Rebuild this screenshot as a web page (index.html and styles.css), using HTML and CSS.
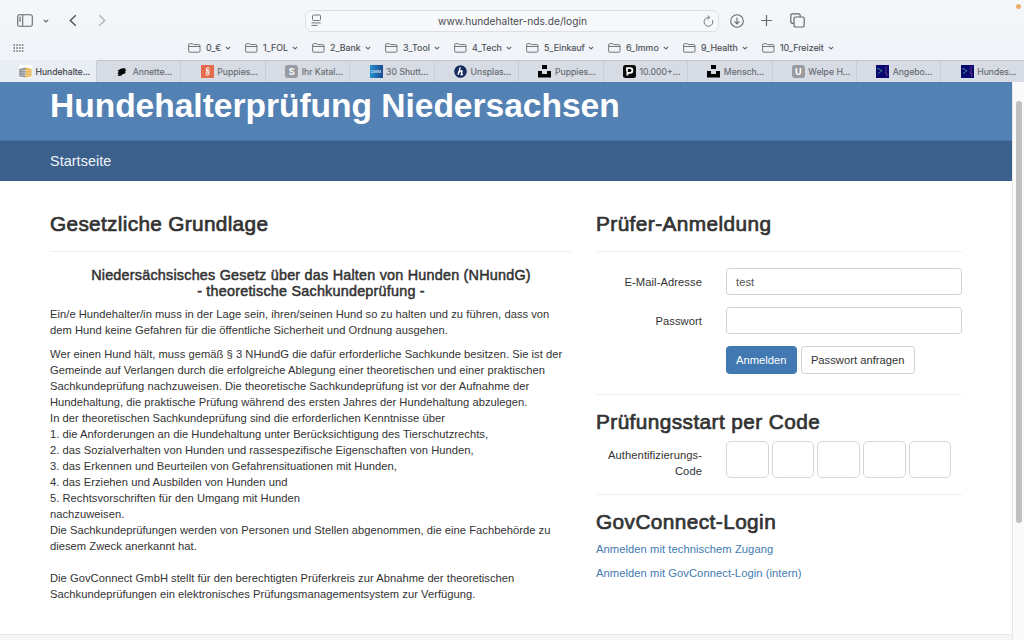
FILE: index.html
```html
<!DOCTYPE html>
<html lang="de">
<head>
<meta charset="utf-8">
<title>Hundehalterprüfung Niedersachsen</title>
<link rel="stylesheet" href="styles.css">
</head>
<body>
<svg class="defs" width="0" height="0" aria-hidden="true">
  <symbol id="folder" viewBox="0 0 13 10"><path d="M.6 8V1.9Q.6.7 1.8.7h2.4q.5 0 .9.4l.6.5h5.1q1.2 0 1.2 1.2V8q0 1.2-1.2 1.2h-9Q.6 9.200.6 8zM.6 3.500h11.400" /></symbol>
  <symbol id="chev" viewBox="0 0 6 4"><path d="M.8.800 3 3 5.200.800"/></symbol>
  <symbol id="unsplash" viewBox="0 0 13 13"><path fill="#000" d="M4 0h5v4H4zM0 6h4v3h5V6h4v6.500H0z"/></symbol>
  <symbol id="dark" viewBox="0 0 13 13"><path fill="#080870" d="M0 0h13v13H0z"/><path d="M1 4l2-.5 1 1.500 2 .5-1.500 1.500L2 8.500" fill="none" stroke="#3f8190" stroke-width="1"/><path d="M11 1.500L9.500 3.500l1 2-1.500 2 2 1-.5 3" fill="none" stroke="#7a3880" stroke-width="1"/></symbol>
</svg>
<header class="chrome">
  <div class="toolbar">
    <svg class="i-side" width="16" height="13" viewBox="0 0 16 13"><rect x=".7" y=".7" width="14.600" height="11.600" rx="1.800"/><path d="M5.700.700v11.600M2.200 3.300h1.800M2.200 5.100h1.800M2.200 6.900h1.800"/></svg>
    <svg class="i-down" width="6" height="4"><use href="#chev"/></svg>
    <svg class="i-back" width="8" height="13" viewBox="0 0 8 13"><path d="M6.800 1.200 1.300 6.500l5.500 5.300"/></svg>
    <svg class="i-fwd" width="8" height="13" viewBox="0 0 8 13"><path d="M1.200 1.200l5.500 5.300-5.500 5.300"/></svg>
    <div class="address">
      <svg width="11" height="13" viewBox="0 0 11 13"><rect x="1.500" y="1" width="8" height="5.500" rx="1"/><path d="M.5 8.900h9.300M.5 11.400h6"/></svg>
      <span class="url">www.hundehalter-nds.de/login</span>
      <svg width="11" height="12" viewBox="0 0 11 12"><path d="M9.500 5.200A4.400 4.400 0 1 1 5.300 2.500h1.200M4.600.400l2.200 2.100-2.200 2.200"/></svg>
    </div>
    <svg class="i-load" width="14" height="14" viewBox="0 0 14 14"><circle cx="7" cy="7" r="6.300"/><path d="M7 3.500v6.300M4.500 7.400 7 9.900l2.500-2.500"/></svg>
    <svg class="i-plus" width="11" height="11" viewBox="0 0 11 11"><path d="M5.500 0v11M0 5.500h11"/></svg>
    <svg class="i-tabs" width="15" height="15" viewBox="0 0 15 15"><path d="M4 10.300H2.400Q.8 10.300.8 8.700V2.400Q.8.800 2.400.8h6.200q1.600 0 1.600 1.600V4"/><rect x="4" y="4" width="10.200" height="10" rx="1.600"/></svg>
    <span class="dot"></span>
  </div>
  <nav class="bookmarks">
    <svg class="i-grid" width="11" height="8" viewBox="0 0 11 8"><path d="M.5 1h10M.5 4h10M.5 7h10"/></svg>
    <div class="bm b1"><svg width="13" height="10"><use href="#folder"/></svg><span>0_€</span><svg width="6" height="4"><use href="#chev"/></svg></div>
    <div class="bm b2"><svg width="13" height="10"><use href="#folder"/></svg><span>1_FOL</span><svg width="6" height="4"><use href="#chev"/></svg></div>
    <div class="bm b3"><svg width="13" height="10"><use href="#folder"/></svg><span>2_Bank</span><svg width="6" height="4"><use href="#chev"/></svg></div>
    <div class="bm b4"><svg width="13" height="10"><use href="#folder"/></svg><span>3_Tool</span><svg width="6" height="4"><use href="#chev"/></svg></div>
    <div class="bm b5"><svg width="13" height="10"><use href="#folder"/></svg><span>4_Tech</span><svg width="6" height="4"><use href="#chev"/></svg></div>
    <div class="bm b6"><svg width="13" height="10"><use href="#folder"/></svg><span>5_Einkauf</span><svg width="6" height="4"><use href="#chev"/></svg></div>
    <div class="bm b7"><svg width="13" height="10"><use href="#folder"/></svg><span>6_Immo</span><svg width="6" height="4"><use href="#chev"/></svg></div>
    <div class="bm b8"><svg width="13" height="10"><use href="#folder"/></svg><span>9_Health</span><svg width="6" height="4"><use href="#chev"/></svg></div>
    <div class="bm b9"><svg width="13" height="10"><use href="#folder"/></svg><span>10_Freizeit</span><svg width="6" height="4"><use href="#chev"/></svg></div>
  </nav>
  <div class="tabs">
    <div class="tab active"><svg width="13" height="13" viewBox="0 0 13 13"><path fill="#fff" d="M0 0h13v13H0z"/><path fill="#777d80" d="M.3 4l6.200-1.500v10L.3 11.500z"/><path fill="#edb64e" d="M6.500 2.500L12.700 4v7.500l-6.200 1z"/><path d="M0 5.600h13M0 8h13M0 10.200h13M3 2v10.500M5 2v10.500" stroke="#e6e9ed" stroke-width=".5"/></svg><span>Hundehalte...</span></div>
    <div class="tab"><svg width="13" height="13" viewBox="0 0 13 13"><path fill="#050505" d="M2.500 5 6 3.200l1 .3L9.500 3l-.5 1.500 1.500.5-1.500 1.300.7.800-1 1.600-1.700.3-2 1.700-3.500.3 1.200-1.500-1.200-1.200L3 6.800 1.500 6z"/></svg><span>Annette...</span></div>
    <div class="tab"><svg width="13" height="13" viewBox="0 0 13 13"><path fill="#e46b4c" d="M0 0h13v13H0z"/><path d="M8.500 3.500 7 2.400 5 4l3.500 2.800L6 8.500 4.500 7.300M8.300 5 5 5.500l3.500 3.200L6.500 10.500 4.500 9.300" fill="none" stroke="#fff" stroke-width="1"/></svg><span>Puppies...</span></div>
    <div class="tab"><i class="fav grey">S</i><span>Ihr Katal...</span></div>
    <div class="tab"><i class="fav dm">DMM</i><span>30 Shutt...</span></div>
    <div class="tab"><svg width="13" height="13" viewBox="0 0 13 13"><circle cx="6.500" cy="6.500" r="6.300" fill="#172d5c"/><path d="M6.300 2.400 4 9.800M5.200 7.200Q8.600 4.300 7.900 7L7.200 9.500h1.800" stroke="#fff" stroke-width="1.400" fill="none"/></svg><span>Unsplas...</span></div>
    <div class="tab"><svg width="13" height="13"><use href="#unsplash"/></svg><span>Puppies...</span></div>
    <div class="tab"><svg width="13" height="13" viewBox="0 0 13 13"><rect width="13" height="13" rx="2.500" fill="#0b0b0b"/><path d="M4 6.700V3.200h3.100a2.200 2.200 0 0 1 0 4.600H4.400v2.700" fill="none" stroke="#fff" stroke-width="1.800"/></svg><span>10.000+...</span></div>
    <div class="tab"><svg width="13" height="13"><use href="#unsplash"/></svg><span>Mensch...</span></div>
    <div class="tab"><i class="fav grey">U</i><span>Welpe H...</span></div>
    <div class="tab"><svg width="13" height="13"><use href="#dark"/></svg><span>Angebo...</span></div>
    <div class="tab"><svg width="13" height="13"><use href="#dark"/></svg><span>Hundes...</span></div>
  </div>
</header>
<div class="viewport">
  <div class="page">
    <div class="banner"><h1>Hundehalterprüfung Niedersachsen</h1></div>
    <nav class="menu"><a>Startseite</a></nav>
    <main>
      <section class="left">
        <h2>Gesetzliche Grundlage</h2>
        <hr>
        <h3>Niedersächsisches Gesetz über das Halten von Hunden (NHundG)<br>- theoretische Sachkundeprüfung -</h3>
        <p>Ein/e Hundehalter/in muss in der Lage sein, ihren/seinen Hund so zu halten und zu führen, dass von<br>dem Hund keine Gefahren für die öffentliche Sicherheit und Ordnung ausgehen.</p>
        <p>Wer einen Hund hält, muss gemäß § 3 NHundG die dafür erforderliche Sachkunde besitzen. Sie ist der<br>Gemeinde auf Verlangen durch die erfolgreiche Ablegung einer theoretischen und einer praktischen<br>Sachkundeprüfung nachzuweisen. Die theoretische Sachkundeprüfung ist vor der Aufnahme der<br>Hundehaltung, die praktische Prüfung während des ersten Jahres der Hundehaltung abzulegen.<br>In der theoretischen Sachkundeprüfung sind die erforderlichen Kenntnisse über<br>1. die Anforderungen an die Hundehaltung unter Berücksichtigung des Tierschutzrechts,<br>2. das Sozialverhalten von Hunden und rassespezifische Eigenschaften von Hunden,<br>3. das Erkennen und Beurteilen von Gefahrensituationen mit Hunden,<br>4. das Erziehen und Ausbilden von Hunden und<br>5. Rechtsvorschriften für den Umgang mit Hunden<br>nachzuweisen.<br>Die Sachkundeprüfungen werden von Personen und Stellen abgenommen, die eine Fachbehörde zu<br>diesem Zweck anerkannt hat.<br><br>Die GovConnect GmbH stellt für den berechtigten Prüferkreis zur Abnahme der theoretischen<br>Sachkundeprüfungen ein elektronisches Prüfungsmanagementsystem zur Verfügung.</p>
      </section>
      <section class="right">
        <h2>Prüfer-Anmeldung</h2>
        <hr>
        <form>
          <div class="row"><label>E-Mail-Adresse</label><div class="input">test</div></div>
          <div class="row"><label>Passwort</label><div class="input"></div></div>
          <div class="buttons"><span class="btn primary">Anmelden</span><span class="btn">Passwort anfragen</span></div>
        </form>
        <hr>
        <h2 class="tight">Prüfungsstart per Code</h2>
        <div class="code"><label>Authentifizierungs-<br>Code</label><div class="cells"><i></i><i></i><i></i><i></i><i></i></div></div>
        <hr>
        <h2 class="tight">GovConnect-Login</h2>
        <a class="link">Anmelden mit technischem Zugang</a>
        <a class="link">Anmelden mit GovConnect-Login (intern)</a>
      </section>
    </main>
    <footer></footer>
  </div>
  <div class="scroll"><div class="thumb"></div></div>
</div>
</body>
</html>
```
FILE: styles.css
```css
* { box-sizing: border-box; }
body { margin: 0; width: 1024px; height: 640px; overflow: hidden; display: flex; flex-direction: column; background: #fff; color: #333; font: 11.2px/16px "Liberation Sans", Arial, sans-serif; white-space: nowrap; }
svg { flex: none; display: block; fill: none; stroke: #66696d; stroke-width: 1.2; }
.defs { position: absolute; }
.chrome { height: 82px; flex: none; display: flex; flex-direction: column; background: linear-gradient(#f5f7fa, #f0f3f8 60px, #e9edf3); font-family: Inter, sans-serif; }
.toolbar { height: 40px; display: flex; align-items: center; padding: 1px 3px 0 16px; }
.i-side { stroke-width: 1.1; margin-left: 1px; }
.i-down { margin-left: 10px; margin-top: 1px; }
.i-back { margin-left: 20px; stroke: #55585c; stroke-width: 1.5; }
.i-fwd { margin-left: 21px; stroke: #b0b3b8; stroke-width: 1.4; }
.address { width: 414px; height: 22px; margin-left: 199px; border: 1px solid #dddfe3; border-radius: 6px; display: flex; align-items: center; justify-content: space-between; padding: 0 4px 0 5px; background: #f7f8fb; }
.address svg { stroke: #75787c; stroke-width: 1; }
.url { font-size: 10.2px; color: #484b50; }
.i-load { margin-left: 11px; stroke-width: 1.1; }
.i-plus { margin-left: 17px; stroke-width: 1.2; }
.i-tabs { margin-left: 18px; stroke-width: 1.2; }
.dot { width: 5px; height: 5px; border-radius: 50%; background: #eeae6b; margin-left: auto; align-self: flex-start; margin-top: 3px; }
.bookmarks { height: 20px; display: flex; align-items: center; padding: 0 0 4px 13px; gap: 14px; font-size: 8.9px; color: #4c4f54; -webkit-text-stroke: .15px #4c4f54; }
.i-grid { margin-right: 150px; stroke-width: 1.3; stroke-dasharray: 1.500 1.300; }
.bm { display: flex; align-items: center; height: 16px; }
.bm svg { stroke-width: .9; }
.bm span { margin-left: 5px; }
.bm svg:last-child { margin-left: auto; stroke-width: 1.100; }
.b1 { width: 43px; } .b2 { width: 53px; } .b3 { width: 59px; } .b4 { width: 55px; } .b5 { width: 58px; }
.b6 { width: 68px; } .b7 { width: 61px; } .b8 { width: 65px; } .b9 { width: 72px; }
.tabs { height: 22px; display: flex; }
.tab { width: 84.45px; flex: none; display: flex; align-items: center; gap: 3.500px; padding-left: 19.300px; border-right: 1px solid #c8ced8; background: #d7dce4; border-top: 1px solid #c3c8d0; color: #686c73; font-size: 8.700px; -webkit-text-stroke: .15px #686c73; }
.tab svg { stroke: none; }
.tab.active { width: 97px; padding-left: 19px; background: #e9edf4; border-top-color: transparent; color: #303338; }
.tab:last-child { border-right: 0; }
.fav { width: 13px; height: 13px; flex: none; font: bold 9px/13px Inter, sans-serif; color: #fff; text-align: center; -webkit-text-stroke: 0; }
.grey { background: #989ba1; border-radius: 3px; }
.dm { background: linear-gradient(90deg, #2592ce, #1b4994); font-size: 4px; font-weight: 400; }
.viewport { flex: 1; display: flex; min-height: 0; }
.page { width: 1012px; display: flex; flex-direction: column; }
.banner { height: 59px; background: #5481b4; border-bottom: 1px solid #4a76a8; padding: 4px 50px 0; }
h1, h2, h3 { margin: 0; }
h1 { font-size: 33.600px; line-height: 40px; letter-spacing: -.04px; color: #fff; }
.menu { height: 40px; background: #3b608c; padding-left: 50px; font-size: 14.400px; line-height: 40px; letter-spacing: .05px; color: #f1f5f9; }
main { height: 453px; padding: 31px 50px 0; display: flex; gap: 24px; letter-spacing: .025px; }
.left { width: 522px; }
.right { width: 366px; }
h2 { font-size: 20.800px; line-height: 24px; font-weight: 400; -webkit-text-stroke: .7px #333; letter-spacing: .32px; }
.right h2 { letter-spacing: .42px; }
hr { border: 0; border-top: 1px solid #f0f0f0; margin: 15px 0 16px; }
h3 { font-size: 14.400px; line-height: 15.500px; font-weight: 400; -webkit-text-stroke: .5px #333; letter-spacing: .21px; text-align: center; margin-bottom: 7px; }
p { margin: 0 0 8px; }
.row, .code { display: flex; gap: 24px; }
.row { margin-bottom: 12px; }
label { width: 106px; text-align: right; padding-top: 6px; letter-spacing: .07px; }
.input { width: 236px; height: 27px; border: 1px solid #d2d2d2; border-radius: 3.500px; padding: 5px 9px; color: #555; }
.buttons { display: flex; gap: 4px; padding-left: 130px; margin-bottom: 20px; }
.btn { height: 28px; border: 1px solid #d2d2d2; border-radius: 3.500px; padding: 5px 9.300px; }
.primary { background: #4279b2; border-color: #3f75ad; color: #fff; padding: 5px 9px; }
.tight { margin: -1px 0 7px; }
.cells { display: flex; gap: 3px; }
.cells i { width: 42.700px; height: 37px; border: 1px solid #d6d6d6; border-radius: 5px; }
.link { display: block; color: #427ab1; margin-bottom: 8px; letter-spacing: .06px; }
footer { flex: 1; background: #f5f5f5; border-top: 1px solid #e7e7e7; }
.scroll { width: 12px; background: #fafafa; border-left: 1px solid #e8e8e8; padding: 19px 0 0 3px; }
.thumb { width: 6px; height: 422px; border-radius: 3px; background: #c1c1c1; }
```
